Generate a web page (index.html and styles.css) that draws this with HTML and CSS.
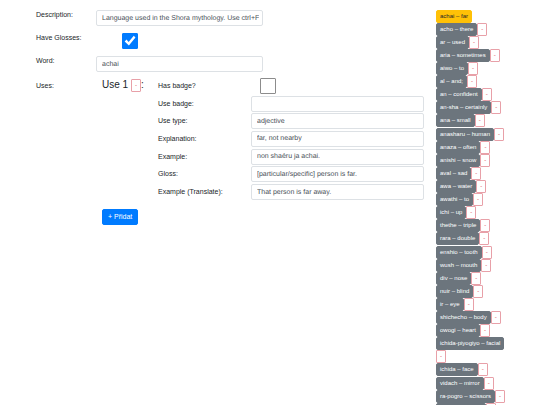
FILE: index.html
```html
<!DOCTYPE html>
<html lang="en">
<head>
<meta charset="utf-8">
<title>Shora dictionary</title>
<link rel="stylesheet" href="styles.css">
</head>
<body>
<main class="page">
  <form class="editor">
    <div class="row">
      <label class="label" for="description">Description:</label>
      <input class="field" id="description" type="text" value="Language used in the Shora mythology. Use ctrl+F to">
    </div>
    <div class="row">
      <label class="label" for="glosses">Have Glosses:</label>
      <input class="check check-main" id="glosses" type="checkbox" checked>
    </div>
    <div class="row">
      <label class="label" for="word">Word:</label>
      <input class="field" id="word" type="text" value="achai">
    </div>
    <div class="row uses">
      <span class="label label-uses">Uses:</span>
      <div class="uses-body">
        <section class="use">
          <h2 class="use-title">Use 1 <button class="remove" type="button">-</button>:</h2>
          <div class="use-fields">
            <label for="has-badge">Has badge?</label><input class="check check-use" id="has-badge" type="checkbox">
            <label for="badge">Use badge:</label><input class="field" id="badge" type="text">
            <label for="type">Use type:</label><input class="field" id="type" type="text" value="adjective">
            <label for="explanation">Explanation:</label><input class="field" id="explanation" type="text" value="far, not nearby">
            <label for="example">Example:</label><input class="field" id="example" type="text" value="non shaéru ja achai.">
            <label for="gloss">Gloss:</label><input class="field" id="gloss" type="text" value="[particular/specific] person is far.">
            <label for="translate">Example (Translate):</label><input class="field" id="translate" type="text" value="That person is far away.">
          </div>
        </section>
        <button class="add" type="button">+ Přidat</button>
      </div>
    </div>
  </form>
  <nav class="words">
    <div class="item"><button class="word current">achai – far</button></div>
    <div class="item"><button class="word">acho – there</button><button class="remove">-</button></div>
    <div class="item"><button class="word">ar – used</button><button class="remove">-</button></div>
    <div class="item"><button class="word">aria – sometimes</button><button class="remove">-</button></div>
    <div class="item"><button class="word">aiwo – to</button><button class="remove">-</button></div>
    <div class="item"><button class="word">al – and;</button><button class="remove">-</button></div>
    <div class="item"><button class="word">an – confident</button><button class="remove">-</button></div>
    <div class="item"><button class="word">an-sha – certainly</button><button class="remove">-</button></div>
    <div class="item"><button class="word">ana – small</button><button class="remove">-</button></div>
    <div class="item"><button class="word">anasharu – human</button><button class="remove">-</button></div>
    <div class="item"><button class="word">anaza – often</button><button class="remove">-</button></div>
    <div class="item"><button class="word">anishi – snow</button><button class="remove">-</button></div>
    <div class="item"><button class="word">aval – sad</button><button class="remove">-</button></div>
    <div class="item"><button class="word">awa – water</button><button class="remove">-</button></div>
    <div class="item"><button class="word">awathi – to</button><button class="remove">-</button></div>
    <div class="item"><button class="word">ichi – up</button><button class="remove">-</button></div>
    <div class="item"><button class="word">thethe – triple</button><button class="remove">-</button></div>
    <div class="item"><button class="word">rara – double</button><button class="remove">-</button></div>
    <div class="item"><button class="word">enshio – tooth</button><button class="remove">-</button></div>
    <div class="item"><button class="word">wush – mouth</button><button class="remove">-</button></div>
    <div class="item"><button class="word">div – nose</button><button class="remove">-</button></div>
    <div class="item"><button class="word">nuir – blind</button><button class="remove">-</button></div>
    <div class="item"><button class="word">ir – eye</button><button class="remove">-</button></div>
    <div class="item"><button class="word">shichecho – body</button><button class="remove">-</button></div>
    <div class="item"><button class="word">owogi – heart</button><button class="remove">-</button></div>
    <div class="item"><button class="word">ichida-piyogiyo – facial</button><button class="remove">-</button></div>
    <div class="item"><button class="word">ichida – face</button><button class="remove">-</button></div>
    <div class="item"><button class="word">vidach – mirror</button><button class="remove">-</button></div>
    <div class="item"><button class="word">ra-pogro – scissors</button><button class="remove">-</button></div>
    <div class="item"><button class="word blank"></button><button class="remove"></button></div>
  </nav>
</main>
</body>
</html>
```
FILE: styles.css
```css
* {
  box-sizing: border-box;
}

html {
  overflow: hidden;
}

body {
  margin: 0;
  background: #fff;
  color: #212529;
  font: 7px/12px "Liberation Sans", Arial, sans-serif;
}

button,
input {
  margin: 0;
  font: inherit;
}

.page {
  display: grid;
  grid-template-columns: minmax(0, 1fr) 70px;
  gap: 12px;
  height: 100vh;
  padding: 10px 34px 0 36px;
}

.editor {
  display: flex;
  flex-direction: column;
  gap: 7px;
}

.row {
  display: grid;
  grid-template-columns: 60px minmax(0, 43%);
  align-items: start;
}

.label {
  margin-top: -1px;
}

.field {
  width: 100%;
  height: 16px;
  padding: 0 3px 0 5px;
  border: 1px solid #dde1e5;
  border-radius: 2px;
  background: #fff;
  color: #495057;
  line-height: 14px;
  text-rendering: geometricPrecision;
}

.check {
  appearance: none;
  width: 16px;
  height: 16px;
  border: 1px solid #8c8c8c;
  border-radius: 1px;
  background: #fff;
}

.check-main {
  margin-left: 26px;
}

.check-use {
  margin-left: 9px;
}

.check:checked {
  border-color: #007bff;
  background: #007bff;
}

.check:checked::after {
  content: "";
  display: block;
  width: 100%;
  height: 100%;
  background: #fff;
  clip-path: polygon(12% 53%, 25% 40%, 40% 57%, 77% 13%, 89% 25%, 42% 82%);
}

.uses {
  grid-template-columns: 60px minmax(0, 1fr);
}

.label-uses {
  margin-top: 1px;
}

.uses-body {
  padding-left: 6px;
}

.use {
  display: grid;
  grid-template-columns: 56px minmax(0, 1fr);
}

.use-title {
  display: flex;
  align-items: center;
  height: 12px;
  margin: 0;
  font-size: 10px;
  font-weight: 400;
  white-space: pre;
}

.use-fields {
  display: grid;
  grid-template-columns: 93px minmax(0, 1fr);
  grid-auto-rows: 1fr;
  align-items: center;
  min-height: 124px;
  margin-top: -2px;
}

.add {
  height: 16px;
  margin-top: 8px;
  padding: 0 5px;
  border: 1px solid #007bff;
  border-radius: 2px;
  background: #007bff;
  color: #fff;
  line-height: 14px;
}

.item {
  display: flex;
  flex-wrap: wrap;
}

.item:nth-child(9n) {
  margin-bottom: 1px;
}

.word {
  height: 13px;
  padding: 0 3px;
  border: 1px solid #6c757d;
  border-radius: 2px;
  background: #6c757d;
  color: #fff;
  font: 6px/11px "Liberation Sans", Arial, sans-serif;
  white-space: nowrap;
}

.word.current {
  border-color: #ffc107;
  background: #ffc107;
  color: #212529;
}

.word.blank {
  width: 50px;
}

.remove {
  width: 10px;
  height: 13px;
  padding: 0;
  border: 1px solid #e8a0a8;
  border-radius: 1px;
  background: #fff;
  color: #dc3545;
  font: 6px/11px "Liberation Sans", Arial, sans-serif;
}
```
